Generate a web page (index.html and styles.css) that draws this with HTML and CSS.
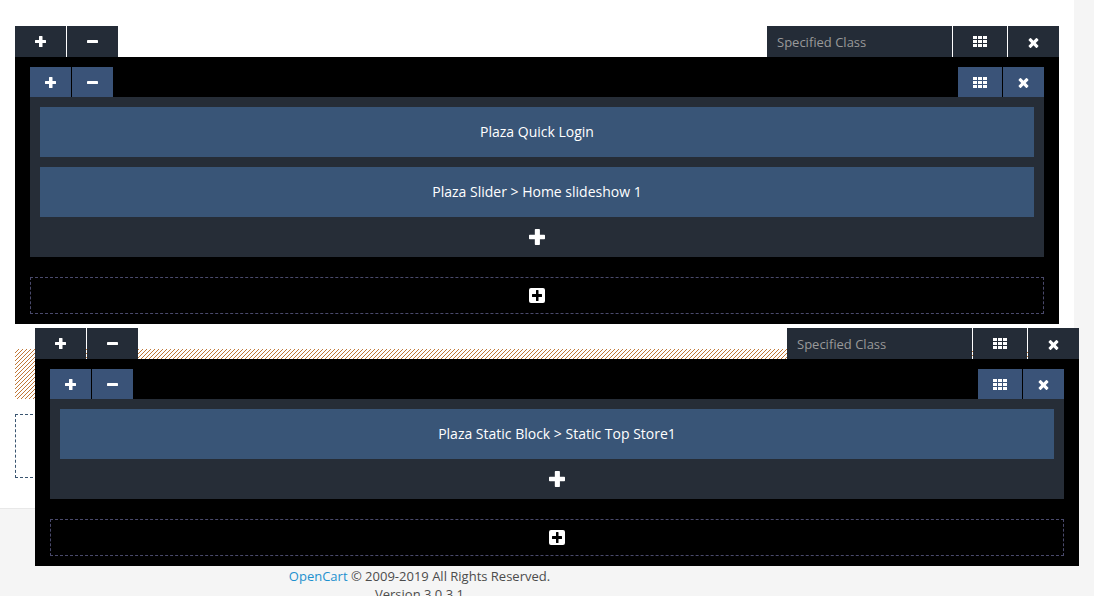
FILE: index.html
```html
<!DOCTYPE html>
<html lang="en">
<head>
<meta charset="utf-8">
<title>Layout builder</title>
<link rel="stylesheet" href="styles.css">
</head>
<body>
<svg class="sprite" aria-hidden="true">
  <symbol id="plus" viewBox="0 0 11 11"><path d="M4 .5q0-.5.5-.5h2.500q.5 0 .5.5V4h3q.5 0 .5.5v2q0 .5-.5.5h-3v3.500q0 .5-.5.5H4.500q-.5 0-.5-.5V7H.5Q0 7 0 6.500v-2Q0 4 .5 4H4z"/></symbol>
  <symbol id="minus" viewBox="0 0 11 11"><rect y="4" width="11" height="3" rx=".4"/></symbol>
  <symbol id="grid" viewBox="0 0 14 11"><path d="M0 0h4v3H0zM5 0h4v3H5zM10 0h4v3h-4zM0 4h4v3H0zM5 4h4v3H5zM10 4h4v3h-4zM0 8h4v3H0zM5 8h4v3H5zM10 8h4v3h-4z"/></symbol>
  <symbol id="times" viewBox="236 116 1320 1440"><path d="M1490 1322q0 40-28 68l-136 136q-28 28-68 28t-68-28l-294-294-294 294q-28 28-68 28t-68-28l-136-136q-28-28-28-68t28-68l294-294-294-294q-28-28-28-68t28-68l136-136q28-28 68-28t68 28l294 294 294-294q28-28 68-28t68 28l136 136q28 28 28 68t-28 68l-294 294 294 294q28 28 28 68z"/></symbol>
  <symbol id="plus-square" viewBox="0 0 16 15"><path fill-rule="evenodd" d="M2 0h12q2 0 2 2v11q0 2-2 2H2q-2 0-2-2V2q0-2 2-2zM7 2.500V6H3.500q-.5 0-.5.5v2q0 .5.5.5H7v3.500q0 .5.5.5h1.500q.5 0 .5-.5V9h3q.5 0 .5-.5v-2q0-.5-.5-.5h-3V2.500Q9.500 2 9 2H7.500Q7 2 7 2.500z"/></symbol>
</svg>
<main class="panel">
  <section class="row">
    <header class="bar">
      <button class="btn" type="button" aria-label="Expand row"><svg class="icon"><use href="#plus"/></svg></button>
      <button class="btn" type="button" aria-label="Collapse row"><svg class="icon"><use href="#minus"/></svg></button>
      <input class="class-input" type="text" placeholder="Specified Class" aria-label="Specified Class">
      <button class="btn" type="button" aria-label="Row columns"><svg class="icon icon-grid"><use href="#grid"/></svg></button>
      <button class="btn" type="button" aria-label="Remove row"><svg class="icon icon-times"><use href="#times"/></svg></button>
    </header>
    <div class="row-body">
      <div class="column">
        <header class="bar">
          <button class="btn btn-column" type="button" aria-label="Expand column"><svg class="icon"><use href="#plus"/></svg></button>
          <button class="btn btn-column" type="button" aria-label="Collapse column"><svg class="icon"><use href="#minus"/></svg></button>
          <button class="btn btn-column push" type="button" aria-label="Column size"><svg class="icon icon-grid"><use href="#grid"/></svg></button>
          <button class="btn btn-column" type="button" aria-label="Remove column"><svg class="icon icon-times"><use href="#times"/></svg></button>
        </header>
        <div class="column-body">
          <div class="module">Plaza Quick Login</div>
          <div class="module">Plaza Slider &gt; Home slideshow 1</div>
          <button class="add-module" type="button" aria-label="Add module"><svg class="icon icon-large"><use href="#plus"/></svg></button>
        </div>
      </div>
      <button class="add-column" type="button" aria-label="Add column"><svg class="icon icon-square"><use href="#plus-square"/></svg></button>
    </div>
  </section>
  <div class="drop-target"></div>
  <div class="add-row"></div>

  <section class="row row-dragging">
    <header class="bar">
      <button class="btn" type="button" aria-label="Expand row"><svg class="icon"><use href="#plus"/></svg></button>
      <button class="btn" type="button" aria-label="Collapse row"><svg class="icon"><use href="#minus"/></svg></button>
      <input class="class-input" type="text" placeholder="Specified Class" aria-label="Specified Class">
      <button class="btn" type="button" aria-label="Row columns"><svg class="icon icon-grid"><use href="#grid"/></svg></button>
      <button class="btn" type="button" aria-label="Remove row"><svg class="icon icon-times"><use href="#times"/></svg></button>
    </header>
    <div class="row-body">
      <div class="column">
        <header class="bar">
          <button class="btn btn-column" type="button" aria-label="Expand column"><svg class="icon"><use href="#plus"/></svg></button>
          <button class="btn btn-column" type="button" aria-label="Collapse column"><svg class="icon"><use href="#minus"/></svg></button>
          <button class="btn btn-column push" type="button" aria-label="Column size"><svg class="icon icon-grid"><use href="#grid"/></svg></button>
          <button class="btn btn-column" type="button" aria-label="Remove column"><svg class="icon icon-times"><use href="#times"/></svg></button>
        </header>
        <div class="column-body">
          <div class="module">Plaza Static Block &gt; Static Top Store1</div>
          <button class="add-module" type="button" aria-label="Add module"><svg class="icon icon-large"><use href="#plus"/></svg></button>
        </div>
      </div>
      <button class="add-column" type="button" aria-label="Add column"><svg class="icon icon-square"><use href="#plus-square"/></svg></button>
    </div>
  </section>
</main>
<footer class="footer"><a class="footer-link" href="#">OpenCart</a> © 2009-2019 All Rights Reserved.<br>Version 3.0.3.1</footer>
</body>
</html>
```
FILE: styles.css
```css
* {
  box-sizing: border-box;
}

html {
  overflow: hidden;
}

body {
  margin: 0;
  background: #f5f5f5;
  color: #4c4c4c;
  font: 13px/18px "Open Sans", sans-serif;
}

button,
input {
  margin: 0;
  border: 0;
  border-radius: 0;
  font: inherit;
}

button {
  padding: 0;
  background: none;
  color: #fff;
  cursor: pointer;
}

.sprite {
  position: absolute;
  width: 0;
  height: 0;
}

.icon {
  display: block;
  width: 11px;
  height: 11px;
  fill: currentColor;
}

.icon-grid {
  width: 14px;
}

.icon-times {
  height: 12px;
}

.icon-large {
  width: 16px;
  height: 16px;
}

.icon-square {
  width: 16px;
  height: 15px;
}

.panel {
  position: relative;
  margin-right: 20px;
  padding: 26px 15px 30px;
  border-bottom: 1px solid #e8e8e8;
  background: #fff;
}

.bar {
  display: flex;
  gap: 1px;
}

.btn {
  display: flex;
  align-items: center;
  height: 31px;
  padding: 0 20px;
  background: #242c37;
}

.btn-column {
  height: 30px;
  padding: 0 15px;
  background: #3a5378;
}

.push {
  margin-left: auto;
}

.class-input {
  width: 185px;
  height: 31px;
  margin-left: auto;
  padding: 0 10px;
  background: #242c37;
  color: #fff;
}

.class-input::placeholder {
  color: #999;
  opacity: 1;
}

.row-body {
  display: grid;
  gap: 20px;
  padding: 10px 15px;
  background: #000;
}

.column-body {
  display: grid;
  gap: 10px;
  padding: 10px 10px 0;
  background: #262d37;
}

.module {
  padding: 16px 10px;
  background: #395577;
  color: #fff;
  font-size: 14px;
  text-align: center;
}

.add-module {
  display: grid;
  place-items: center;
  height: 40px;
  margin-top: -10px;
}

.add-column {
  display: grid;
  place-items: center;
  height: 37px;
  border: 1px dashed #4a4a6c;
}

.drop-target {
  height: 50px;
  margin-top: 25px;
  background-color: #fff;
  background-image: linear-gradient(135deg, #fff 40%, #c07838 48%, #c07838 52%, #fff 60%);
  background-size: 4px 4px;
}

.add-row {
  height: 64px;
  margin-top: 15px;
  border: 1px dashed #3a5570;
}

.row-dragging {
  position: absolute;
  top: 328px;
  right: -5px;
  left: 35px;
}

.footer {
  padding: 58px 255px 20px 0;
  text-align: center;
}

.footer-link {
  color: #1e91cf;
  text-decoration: none;
}
```
